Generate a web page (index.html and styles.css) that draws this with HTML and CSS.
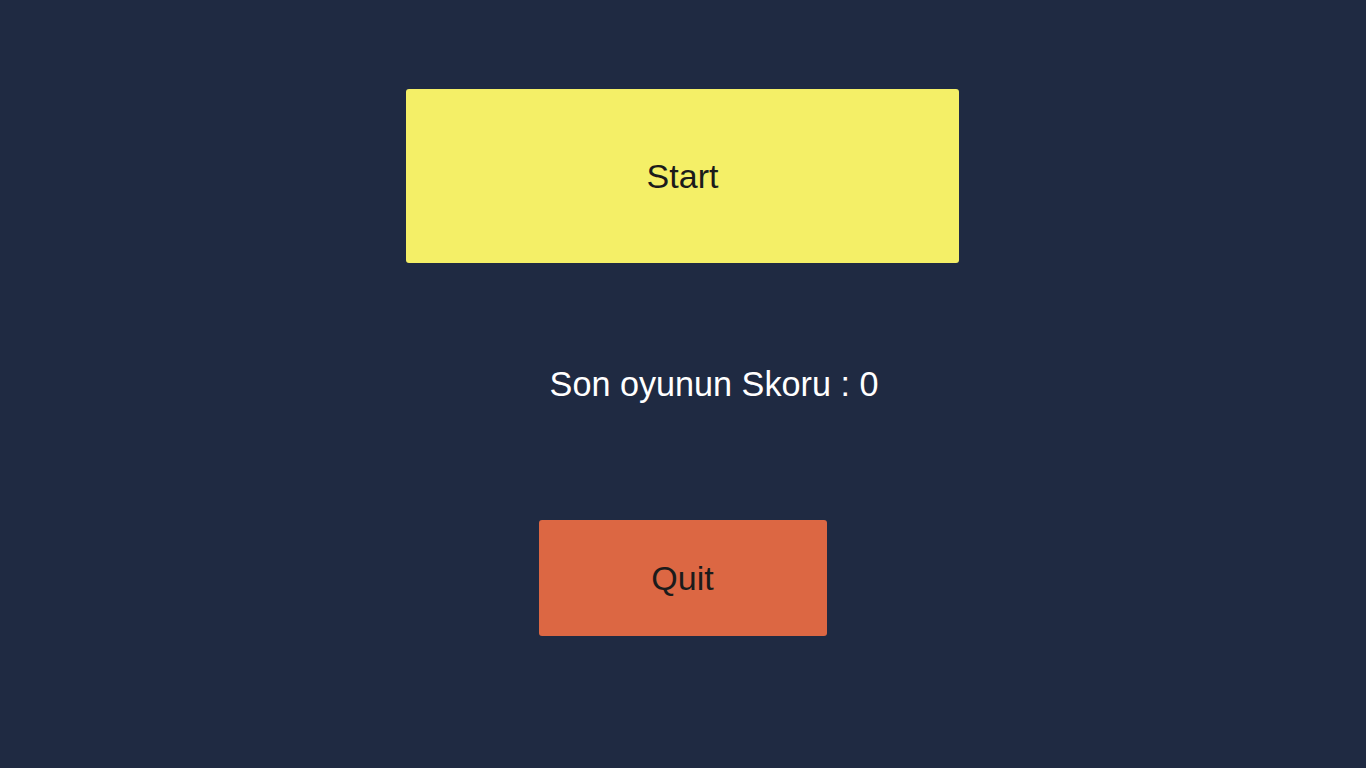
FILE: index.html
```html
<!DOCTYPE html>
<html lang="tr">
<head>
<meta charset="utf-8">
<title>Menu</title>
<link rel="stylesheet" href="styles.css">
</head>
<body>
<main class="menu">
  <button class="btn btn-start">Start</button>
  <div class="score">Son oyunun Skoru : 0</div>
  <button class="btn btn-quit">Quit</button>
</main>
</body>
</html>
```
FILE: styles.css
```css
html, body {
  margin: 0;
  padding: 0;
  height: 100%;
}
body {
  background: #1f2a42;
  font-family: "Liberation Sans", Arial, sans-serif;
  overflow: hidden;
}
.menu {
  display: flex;
  flex-direction: column;
  align-items: center;
  padding-top: 89px;
  padding-right: 1px;
}
.btn {
  border: none;
  border-radius: 3px;
  font-family: "Liberation Sans", Arial, sans-serif;
  font-size: 34px;
  color: #1b1b1b;
  padding: 0;
  cursor: pointer;
}
.btn-start {
  width: 553px;
  height: 174px;
  background: #f4ef67;
}
.score {
  margin-top: 101px;
  height: 40px;
  line-height: 40px;
  font-size: 34.2px;
  color: #ffffff;
  margin-left: 63px;
}
.btn-quit {
  margin-top: 116px;
  width: 288px;
  height: 116px;
  background: #dc6743;
}
```
